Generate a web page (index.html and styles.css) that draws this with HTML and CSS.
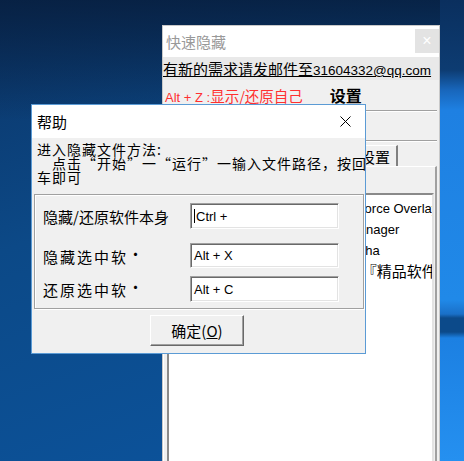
FILE: index.html
```html
<!DOCTYPE html>
<html lang="zh-CN">
<head>
  <meta charset="UTF-8">
  <meta name="viewport" content="width=device-width, initial-scale=1.0">
  <title>快速隐藏 - 帮助</title>
  <link rel="stylesheet" href="styles.css">
</head>
<body>
  <div class="window main-win">
    <div class="titlebar">
      <span class="title">快速隐藏</span>
      <span class="close-box">×</span>
    </div>
    <div class="main-body">
      <div class="mail-row"><span class="mail">有新的需求请发邮件至<span class="latin">31604332@qq.com</span></span></div>
      <div class="hotkey-row">
        <span class="hotkey"><span class="latin">Alt + Z :</span>显示/还原自己</span>
        <span class="settings">设置</span>
      </div>
      <div class="toolbar"></div>
      <div class="tabs">
        <span class="tab first">程序列表</span>
        <span class="tab">设置</span>
      </div>
      <div class="panel">
        <div class="panel-head"></div>
        <ul class="list">
          <li>NVIDIA Container – NVIDIA GeForce Overlay</li>
          <li>Windows 任务管理器 — Task Manager</li>
          <li>360极速浏览器X - 新标签页 - Alpha</li>
          <li class="cn">吾爱破解论坛 - 【吾爱破解】『精品软件』</li>
        </ul>
      </div>
    </div>
  </div>

  <div class="window dialog">
    <div class="titlebar dlg-title">
      <span class="title">帮助</span>
      <span class="x-btn">
        <svg width="11" height="11" viewBox="0 0 11 11"><path d="M0.5 0.5 L10.5 10.5 M10.5 0.5 L0.5 10.5" stroke="#000" stroke-width="1" fill="none"/></svg>
      </span>
    </div>
    <div class="dlg-body">
      <p class="help-text">进入隐藏文件方法:
　点击“开始”一“运行”一输入文件路径，按回车即可</p>
      <div class="group">
        <div class="field">
          <label>隐藏/还原软件本身</label>
          <div class="input"><span class="caret"></span>Ctrl +</div>
        </div>
        <div class="field second">
          <label class="spaced">隐藏选中软<span class="dot">·</span></label>
          <div class="input">Alt + X</div>
        </div>
        <div class="field third">
          <label class="spaced">还原选中软<span class="dot">·</span></label>
          <div class="input">Alt + C</div>
        </div>
      </div>
      <button class="ok">确定(<u>O</u>)</button>
    </div>
  </div>
</body>
</html>
```

FILE: styles.css
```css
* { box-sizing: border-box; }
html, body { margin: 0; }
body {
  width: 464px;
  height: 461px;
  overflow: hidden;
  position: relative;
  font-family: "Noto Sans CJK SC", sans-serif;
  background:
    linear-gradient(180deg, rgba(7, 30, 62, 0.85) 0, rgba(7, 30, 62, 0) 120px),
    linear-gradient(160deg, #0b3466 0%, #0c4987 40%, #0c55a0 100%);
}
/* bright strip of the wallpaper on the right */
body::before {
  content: "";
  position: absolute;
  left: 440px;
  top: 0;
  width: 24px;
  height: 461px;
  background: linear-gradient(180deg, #0a2f5e 0, #0d3c72 70px, #1866bb 90px, #1e80e2 110px, #2089e8 300px, #1a70c8 314px, #0c4a8a 318px, #0c4a8a 332px, #1c80e2 338px, #2590f0 461px);
}

.window {
  position: absolute;
  overflow: hidden;
}
.titlebar {
  display: flex;
  align-items: center;
  background: #fff;
}
.title { font-size: 15px; }

/* ---- main window ---- */
.main-win {
  left: 162px;
  top: 25px;
  width: 278px;
  height: 445px;
  border: 1px solid #c9c9c9;
  background: #f0f0f0;
}
.main-win .titlebar {
  height: 31px;
  padding-left: 3px;
  justify-content: space-between;
  align-items: flex-start;
}
.main-win .title {
  color: #999;
  line-height: 31px;
}
.close-box {
  width: 24px;
  height: 24px;
  margin-top: 3px;
  background: #e3e3e3;
  color: #fff;
  font-family: "Liberation Sans", sans-serif;
  font-size: 16px;
  line-height: 24px;
  text-align: center;
}
.latin { font-family: "Liberation Sans", sans-serif; }
.mail-row {
  height: 23px;
  background: #e9e9e9;
  line-height: 23px;
  font-size: 15px;
}
.mail { text-decoration: underline; color: #000; }
.mail .latin { font-size: 13.5px; }
.hotkey-row {
  height: 30px;
  display: flex;
  align-items: center;
  padding-left: 2px;
}
.hotkey {
  color: #ff3030;
  font-size: 14.5px;
}
.hotkey .latin { font-size: 13px; }
.settings {
  margin-left: 27px;
  font-size: 16px;
  font-weight: bold;
}
.toolbar {
  height: 31px;
  border-top: 1px solid #a0a0a0;
  border-bottom: 1px solid #a0a0a0;
  box-shadow: inset 0 1px #fff, 0 1px #fff;
  margin-right: 2px;
}
.tabs {
  height: 25px;
  display: flex;
  align-items: flex-end;
  padding-left: 2px;
}
.tab {
  height: 21px;
  padding: 0 6px 0 5px;
  font-size: 15px;
  line-height: 21px;
  border-top: 1px solid #fff;
  border-left: 1px solid #fff;
  border-right: 2px solid #808080;
}
.tab.first {
  width: 189px;
  height: 24px;
}
.panel {
  height: 300px;
  margin-right: 2px;
  border-top: 1px solid #fff;
  border-left: 1px solid #fff;
  border-right: 2px solid #a0a0a0;
  padding: 0 1px 0 3px;
}
.panel-head { height: 26px; }
.list {
  list-style: none;
  margin: 0;
  padding: 3px 0 0 7px;
  height: 300px;
  background: #fff;
  border-top: 2px solid #8a8a8a;
  border-left: 2px solid #8a8a8a;
  border-right: 2px solid #e3e3e3;
  font-family: "Liberation Sans", "Noto Sans CJK SC", sans-serif;
  font-size: 13px;
  white-space: nowrap;
  overflow: hidden;
}
.list li {
  height: 21px;
  line-height: 21px;
}
.list li.cn { font-size: 15px; }

/* ---- help dialog ---- */
.dialog {
  left: 31px;
  top: 104px;
  width: 335px;
  height: 250px;
  border: 1px solid #5b9bd5;
  background: #f0f0f0;
}
.dlg-title {
  height: 33px;
  padding-left: 5px;
  justify-content: space-between;
}
.x-btn {
  width: 40px;
  height: 33px;
  display: flex;
  align-items: center;
  justify-content: center;
}
.dlg-body {
  padding: 4px 0 0 2px;
}
.help-text {
  margin: 0 0 0 3px;
  width: 331px;
  font-size: 14px;
  letter-spacing: 1px;
  line-height: 14px;
  white-space: pre-wrap;
}
.group {
  width: 330px;
  height: 115px;
  margin-top: 10px;
  padding: 8px 0 0 8px;
  border: 1px solid #a0a0a0;
  box-shadow: inset 1px 1px #fff, 1px 1px #fff;
}
.field {
  display: flex;
  align-items: center;
  height: 26px;
}
.field.second { margin-top: 14px; height: 25px; }
.field.third { margin-top: 8px; }
.field label {
  width: 147px;
  font-size: 15px;
  line-height: 22px;
  padding-top: 2px;
}
.field label.spaced { letter-spacing: 2px; }
.dot { position: relative; top: -3px; letter-spacing: 0; }
.input {
  width: 149px;
  height: 100%;
  background: #fff;
  border-top: 1px solid #a0a0a0;
  border-left: 1px solid #a0a0a0;
  border-bottom: 1px solid #fff;
  border-right: 1px solid #fff;
  box-shadow: inset 1px 1px #696969, inset -1px -1px #e3e3e3;
  display: flex;
  align-items: center;
  padding-left: 3px;
  font-family: "Liberation Sans", sans-serif;
  font-size: 13px;
}
.caret {
  width: 1px;
  height: 14px;
  background: #000;
  margin-right: 1px;
}
.ok {
  display: block;
  width: 94px;
  height: 31px;
  margin: 6px 0 0 116px;
  padding: 0;
  background: #f0f0f0;
  border-top: 1px solid #fff;
  border-left: 1px solid #fff;
  border-right: 1px solid #696969;
  border-bottom: 1px solid #696969;
  box-shadow: inset -1px -1px #a0a0a0;
  font-family: "Noto Sans CJK SC", sans-serif;
  font-size: 15px;
  color: #000;
}
```
